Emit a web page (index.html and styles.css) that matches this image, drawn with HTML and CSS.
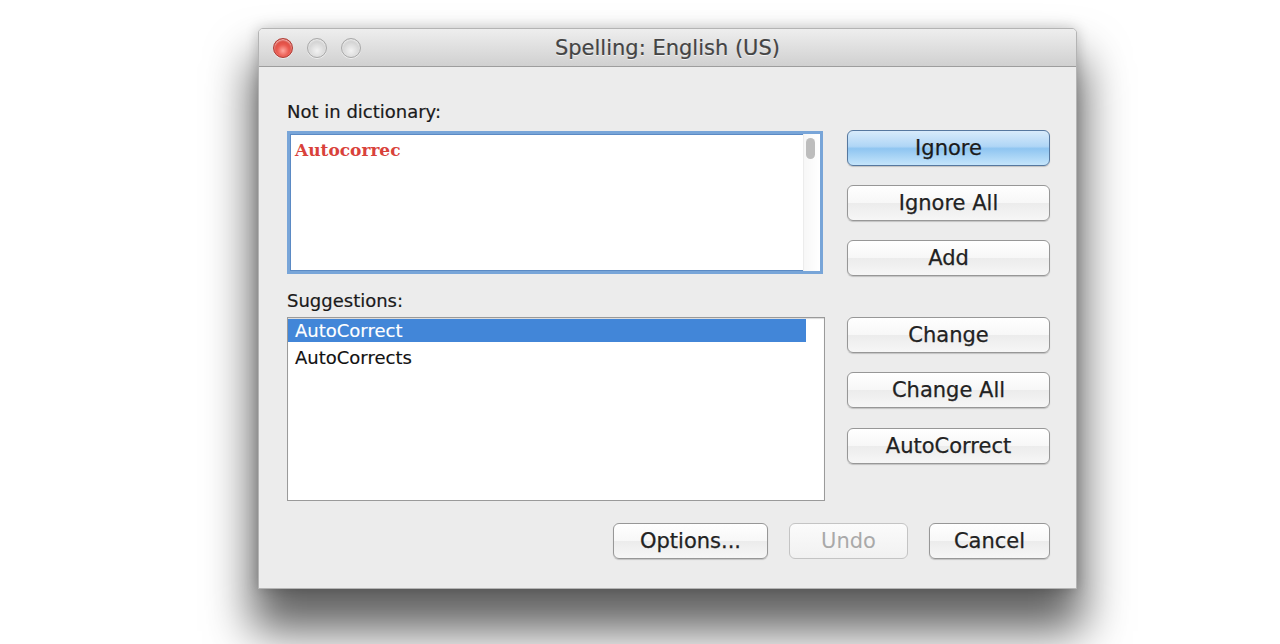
FILE: index.html
```html
<!DOCTYPE html>
<html lang="en">
<head>
    <meta charset="UTF-8">
    <title>Spelling: English (US)</title>
    <link rel="stylesheet" href="styles.css">
</head>
<body>

    <div class="window">
        <div class="titlebar">
            <div class="lights">
                <span class="light close"></span>
                <span class="light"></span>
                <span class="light"></span>
            </div>
            <div class="title">Spelling: English (US)</div>
            <div></div>
        </div>

        <div class="content">
            <div class="top">
                <div class="left">
                    <div class="label">Not in dictionary:</div>
                    <div class="textbox">
                        <span class="bad-word">Autocorrec</span>
                        <div class="scroll-track"><div class="thumb"></div></div>
                    </div>

                    <div class="label suggestions-label">Suggestions:</div>
                    <div class="list">
                        <div class="rows">
                            <div class="row selected">AutoCorrect</div>
                            <div class="row">AutoCorrects</div>
                        </div>
                        <div class="list-track"></div>
                    </div>
                </div>

                <div class="right">
                    <button class="btn default">Ignore</button>
                    <button class="btn">Ignore All</button>
                    <button class="btn">Add</button>
                    <button class="btn group-start">Change</button>
                    <button class="btn">Change All</button>
                    <button class="btn">AutoCorrect</button>
                </div>
            </div>

            <div class="bottom">
                <button class="btn options">Options...</button>
                <button class="btn undo" disabled>Undo</button>
                <button class="btn cancel">Cancel</button>
            </div>
        </div>
    </div>

</body>
</html>
```

FILE: styles.css
```css
/* General Styles */
body {
    margin: 0;
    background: #ffffff;
    font-family: 'DejaVu Sans', sans-serif;
    height: 644px;
    overflow: hidden;
}

.window {
    margin: 28px 0 0 258px;
    width: 819px;
    height: 561px;
    box-sizing: border-box;
    background: #ececec;
    border: 1px solid #b4b4b4;
    border-radius: 5px 5px 0 0;
    box-shadow: 0 36px 46px 6px rgba(0, 0, 0, 0.62), 0 0 14px rgba(0, 0, 0, 0.2);
    display: flex;
    flex-direction: column;
}

/* Title bar */
.titlebar {
    height: 38px;
    box-sizing: border-box;
    flex-shrink: 0;
    display: grid;
    grid-template-columns: 1fr auto 1fr;
    align-items: center;
    background: linear-gradient(#eeeeee, #dcdcdc 60%, #d0d0d0);
    border-bottom: 1px solid #9d9d9d;
    border-radius: 4px 4px 0 0;
}

.lights {
    display: flex;
    gap: 14px;
    padding-left: 14px;
}

.light {
    width: 20px;
    height: 20px;
    border-radius: 50%;
    box-sizing: border-box;
    border: 1px solid #a9a9a9;
    background: radial-gradient(circle at 50% 65%, #f2f2f2 0, #dcdcdc 45%, #bdbdbd 100%);
    box-shadow: inset 0 1px 2px rgba(255, 255, 255, 0.8), 0 1px 0 rgba(255, 255, 255, 0.6);
}

.light.close {
    border-color: #b03b34;
    background: radial-gradient(circle at 50% 65%, #ffa79f 0, #ea5a50 40%, #c8342b 100%);
}

.title {
    font-size: 21px;
    color: #444444;
    -webkit-text-stroke: 0.2px #444444;
    text-shadow: 0 1px 0 rgba(255, 255, 255, 0.7);
}

/* Body */
.content {
    padding: 34px 26px 31px 28px;
    display: flex;
    flex-direction: column;
}

.top {
    display: flex;
    gap: 22px;
}

.left {
    width: 538px;
}

.label {
    font-size: 18px;
    line-height: 22px;
    color: #1a1a1a;
    -webkit-text-stroke: 0.2px #1a1a1a;
    margin-bottom: 8px;
}

.suggestions-label {
    margin-top: 16px;
    margin-bottom: 5px;
}

.textbox {
    width: 536px;
    height: 143px;
    box-sizing: border-box;
    background: #ffffff;
    border: 3px solid #78a5d8;
    box-shadow: inset 0 0 0 1px #5b8ac4;
    display: flex;
    justify-content: space-between;
}

.bad-word {
    font-family: 'DejaVu Serif', serif;
    font-weight: bold;
    font-size: 17px;
    color: #d9423b;
    padding: 6px 0 0 5px;
}

.scroll-track {
    width: 17px;
    border-left: 1px solid #ececec;
    background: linear-gradient(90deg, #f7f7f7, #ffffff);
    padding: 4px 0 0 2px;
    box-sizing: border-box;
}

.thumb {
    width: 9px;
    height: 21px;
    border-radius: 5px;
    background: #bdbdbd;
}

.list {
    width: 538px;
    height: 184px;
    box-sizing: border-box;
    background: #ffffff;
    border: 1px solid #9a9a9a;
    box-shadow: inset 0 1px 1px rgba(0, 0, 0, 0.15);
    display: flex;
    padding-top: 1px;
}

.rows {
    flex: 1;
}

.row {
    font-size: 18px;
    line-height: 23px;
    height: 23px;
    padding-left: 7px;
    color: #111111;
    -webkit-text-stroke: 0.15px #111111;
}

.row + .row {
    margin-top: 4px;
}

.row.selected {
    background: #4286d8;
    color: #ffffff;
    -webkit-text-stroke: 0.15px #ffffff;
}

.list-track {
    width: 18px;
}

/* Buttons */
.right {
    width: 203px;
    padding-top: 29px;
    display: flex;
    flex-direction: column;
    gap: 19px;
}

.btn {
    height: 36px;
    box-sizing: border-box;
    font-family: 'DejaVu Sans', sans-serif;
    font-size: 21px;
    color: #222222;
    -webkit-text-stroke: 0.25px #222222;
    padding: 0;
    border: 1px solid #979797;
    border-radius: 6px;
    background: linear-gradient(#ffffff, #f7f7f7 50%, #ececec 51%, #f6f6f6);
    box-shadow: 0 1px 1px rgba(0, 0, 0, 0.18);
    cursor: pointer;
}

.btn.default {
    border-color: #56789f;
    background: linear-gradient(#d8ebfb, #b0d6f6 45%, #8fc5f1 52%, #c5e5fb);
    color: #1a1a1a;
}

.btn.group-start {
    margin-top: 22px;
}

.btn.group-start + .btn + .btn {
    margin-top: 1px;
}

.bottom {
    margin-top: 22px;
    display: flex;
    justify-content: flex-end;
    gap: 21px;
}

.options {
    width: 155px;
}

.undo {
    width: 119px;
    color: #a9a9a9;
    -webkit-text-stroke: 0;
    border-color: #c4c4c4;
    background: linear-gradient(#fbfbfb, #f1f1f1);
    box-shadow: none;
    cursor: default;
}

.cancel {
    width: 121px;
}
```
